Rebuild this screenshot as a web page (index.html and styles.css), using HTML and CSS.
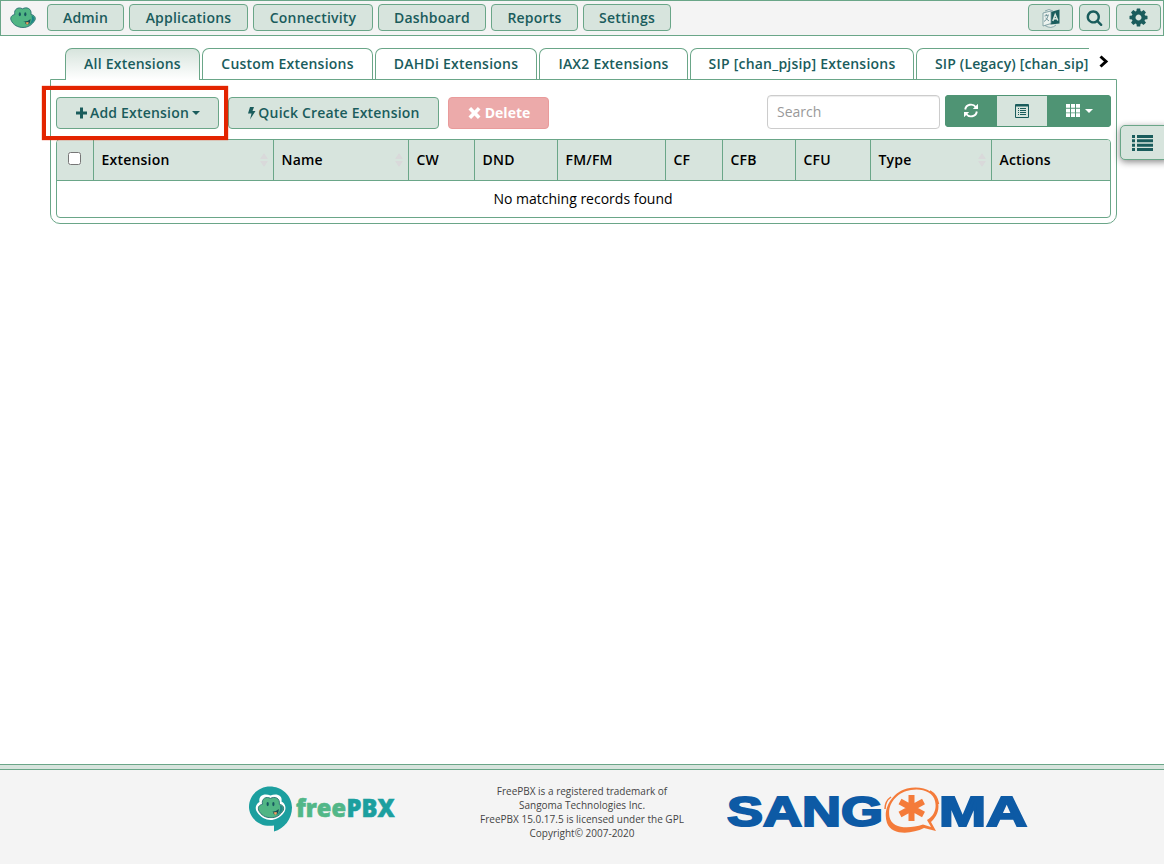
FILE: index.html
```html
<!DOCTYPE html>
<html lang="en">
<head>
<meta charset="utf-8">
<title>Extensions</title>
<link rel="stylesheet" href="styles.css">
</head>
<body>
<svg width="0" height="0" class="defs" aria-hidden="true">
  <symbol id="frog" viewBox="0 0 26 21">
    <path d="M4.800 7.500C3.500 2 8.500-.5 12.500 1.800C16.500-.5 22 1.500 21 7.500C24 8 26 10 25 13C22 18 18 20.500 13 20.500S3 18 1 13C0 10 2 8 4.800 7.500Z" fill="#50b584" stroke="#2c7174" stroke-width=".9"/>
    <path d="M21.500 8.500C25.500 9.500 25 13.500 22 16L18 18.500C21.500 15.500 22.500 13 21.500 8.500Z" fill="#1d8588"/>
    <ellipse cx="9.800" cy="7.300" rx="1.100" ry="2" fill="#185760"/><ellipse cx="15.300" cy="7.300" rx="1.100" ry="2" fill="#185760"/>
    <path d="M13 14.500Q17.500 15 20.500 12Q20.500 17.500 17 17.500Q15 17 15 15Z" fill="#174f58"/>
    <path d="M15.500 15.500L18.500 15Q19 17.800 16.800 17.500Z" fill="#f5a15c"/>
  </symbol>
</svg>
<header class="topbar">
  <svg class="frog"><use href="#frog"/></svg>
  <nav class="menu">
    <button class="btn w77">Admin</button><button class="btn w119">Applications</button><button class="btn w120">Connectivity</button><button class="btn w108">Dashboard</button><button class="btn w87">Reports</button><button class="btn w88">Settings</button>
  </nav>
  <div class="tools">
    <button class="btn w45"><svg width="20" height="20" viewBox="0 0 20 20"><path d="M9.500 4L18.500 1.500V15.500L9.500 16.500Z" fill="#1a5c5c"/><path d="M2 5L10 3V15.500L2 18ZM4 3Q8 0 12 3M4 17.500Q10 21.500 15 17" fill="#edf3ef" stroke="#71949a" stroke-width=".8"/><path d="M3.500 8L8 7M5 6L6 8M7 8Q6 12 3 13.500M4.500 10L8 13" fill="none" stroke="#71949a"/><path d="M11.800 13L14.200 6.500L16.800 12.500M12.700 11L15.700 10.500" fill="none" stroke="#d7e4dd" stroke-width="1.500"/></svg></button>
    <button class="btn w31"><svg width="17" height="17" viewBox="0 0 1792 1792"><path fill="currentColor" d="M1216 832q0-185-131.500-316.500t-316.500-131.500-316.500 131.500-131.500 316.500 131.500 316.500 316.500 131.500 316.500-131.500 131.500-316.500zm512 832q0 52-38 90t-90 38q-54 0-90-38l-343-342q-179 124-399 124-143 0-273.500-55.500t-225-150-150-225-55.500-273.500 55.500-273.500 150-225 225-150 273.500-55.500 273.500 55.500 225 150 150 225 55.500 273.500q0 220-124 399l343 343q37 37 37 90z"/></svg></button>
    <button class="btn w45"><svg width="21" height="21" viewBox="0 0 1792 1792"><path fill="currentColor" d="M1152 896q0-106-75-181t-181-75-181 75-75 181 75 181 181 75 181-75 75-181zm512-109v222q0 12-8 23t-20 13l-185 28q-19 54-39 91 35 50 107 138 10 12 10 25t-9 23q-27 37-99 108t-94 71q-12 0-26-9l-138-108q-44 23-91 38-16 136-29 186-7 28-36 28h-222q-14 0-24.500-8.500t-11.500-21.500l-28-184q-49-16-90-37l-141 107q-10 9-25 9-14 0-25-11-126-114-165-168-7-10-7-23 0-12 8-23 15-21 51-66.500t54-70.500q-27-50-41-99l-183-27q-13-2-21-12.500t-8-23.500v-222q0-12 8-23t19-13l186-28q14-46 39-92-40-57-107-138-10-12-10-24 0-10 9-23 26-36 98.500-107.500t94.500-71.500q13 0 26 10l138 107q44-23 91-38 16-136 29-186 7-28 36-28h222q14 0 24.500 8.500t11.500 21.500l28 184q49 16 90 37l142-107q9-9 24-9 13 0 25 10 129 119 165 170 7 8 7 22 0 12-8 23-15 21-51 66.500t-54 70.500q26 50 41 98l183 28q13 2 21 12.500t8 23.500z"/></svg></button>
  </div>
</header>

<main class="page">
  <div class="tabrow">
    <div class="tabs">
      <a class="tab active w135">All Extensions</a><a class="tab w171">Custom Extensions</a><a class="tab w162">DAHDi Extensions</a><a class="tab w149">IAX2 Extensions</a><a class="tab w224">SIP [chan_pjsip] Extensions</a><a class="tab last">SIP (Legacy) [chan_sip]</a>
    </div>
    <svg class="next" width="10" height="13" viewBox="0 0 10 13"><path d="M1.500 1.500L7 6.500L1.500 11.500" fill="none" stroke="#000" stroke-width="3"/></svg>
  </div>
  <section class="panel">
    <div class="toolbar">
      <div class="highlighted"><button class="btn big w163"><svg width="13" height="14" viewBox="0 0 13 14"><path d="M5 1.500h3v4h4v3H8v4H5v-4H1v-3h4z" fill="currentColor"/></svg><span>Add Extension</span><i class="caret"></i></button><div class="marker"></div></div>
      <button class="btn big w211"><svg width="9" height="14" viewBox="0 0 9 14"><path d="M3 1h4L5.500 5H8.500L3 13.500L4.500 7.500H1Z" fill="currentColor"/></svg><span>Quick Create Extension</span></button>
      <button class="btn big delete"><svg width="15" height="14" viewBox="0 0 14 14"><path d="M3.600 1L7 4.400L10.400 1L13 3.600L9.600 7L13 10.400L10.400 13L7 9.600L3.600 13L1 10.400L4.400 7L1 3.600Z" fill="currentColor"/></svg><span>Delete</span></button>
      <input class="search" placeholder="Search">
      <div class="group">
        <button class="seg w51"><svg width="16" height="15" viewBox="0 0 16 15"><path d="M2.200 6.500C3 1 10 .3 12.800 4M13.800 8.500C13 14 6 14.700 3.200 11" fill="none" stroke="currentColor" stroke-width="1.900"/><path d="M15 .8V6H9.800ZM1 14.200V9H6.200Z" fill="currentColor"/></svg></button>
        <button class="seg light"><svg width="14" height="14" viewBox="0 0 14 14"><path d="M.5.5h13v13H.5z" fill="none" stroke="currentColor"/><path d="M1 1h12v1.500H1zM3 4h1v1H3zM5 4h6v1H5zM3 6h1v1H3zM5 6h6v1H5zM3 8h1v1H3zM5 8h6v1H5zM3 10h1v1H3zM5 10h6v1H5z" fill="currentColor"/></svg></button>
        <button class="seg wide"><svg width="14" height="13" viewBox="0 0 14 13"><path d="M0 0h4v3.700H0zM5 0h4v3.700H5zM10 0h4v3.700h-4zM0 4.700h4v3.700H0zM5 4.700h4v3.700H5zM10 4.700h4v3.700h-4zM0 9.300h4V13H0zM5 9.300h4V13H5zM10 9.300h4V13h-4z" fill="currentColor"/></svg><i class="caret"></i></button>
      </div>
    </div>
    <div class="grid">
      <div class="head">
        <div class="check"><input type="checkbox"></div><div>Extension<i class="sort"></i></div><div>Name<i class="sort"></i></div><div>CW</div><div>DND</div><div>FM/FM</div><div>CF</div><div>CFB</div><div>CFU</div><div>Type<i class="sort"></i></div><div>Actions</div>
      </div>
      <div class="empty">No matching records found</div>
    </div>
  </section>
</main>

<button class="drawer"><svg width="21" height="16" viewBox="0 0 21 16"><path d="M0 0h3v3H0zM5 0h16v3H5zM0 4.300h3v3H0zM5 4.300h16v3H5zM0 8.700h3v3H0zM5 8.700h16v3H5zM0 13h3v3H0zM5 13h16v3H5z" fill="currentColor"/></svg></button>

<footer class="footer">
  <svg class="fpbx" width="150" height="50" viewBox="0 0 150 50">
    <path d="M26 45.500V39.500C11 42 1 31 1 21C1 9 11 .5 22 .5S44 9 44 21.500C44 33 36 43 26 45.500Z" fill="#1c9f9f"/>
    <path d="M11.500 16C10 9 17 7 22.500 9.500C28 7 35 9 33.500 15.500C38 18 38.500 23 36 26.500C32 32 27 34 22.500 34S12 31 9 26C6.500 22 8 18 11.500 16Z" fill="#fff"/>
    <use href="#frog" x="9.500" y="10.500" width="27" height="21.800"/>
    <text x="48" y="30.500" class="free" textLength="50" lengthAdjust="spacingAndGlyphs">free</text>
    <text x="98.500" y="30.500" class="pbx" textLength="48" lengthAdjust="spacingAndGlyphs">PBX</text>
  </svg>
  <div class="legal">FreePBX is a registered trademark of<br>Sangoma Technologies Inc.<br>FreePBX 15.0.17.5 is licensed under the GPL<br>Copyright© 2007-2020</div>
  <svg class="sangoma" width="302" height="50" viewBox="0 0 302 50">
    <text x="0" y="39.500" class="sg" textLength="156" lengthAdjust="spacingAndGlyphs">SANG</text>
    <text x="212" y="39.500" class="sg" textLength="88" lengthAdjust="spacingAndGlyphs">MA</text>
    <path fill-rule="evenodd" fill="#f47b3a" d="M180 2.500C195-1 209 5 211 16C213 26 208 32 204 36L209 45L197 42C185 48 165 50 160 37C155 22 166 6 180 2.500ZM184 4C170 6 160 18 162.500 31C165 43 182 43 196 38.500L204 41L200 34C207 30 210 23 208 15C206 6 195 2 184 4Z"/>
    <path d="M164 11Q158 15 158 23M203 5Q210 9 211.500 18" fill="none" stroke="#f47b3a" stroke-width="1.500"/>
    <path d="M184.500 9V35M173 15.500L196.500 28.500M173 28.500L196.500 15.500" stroke="#f47b3a" stroke-width="6"/>
  </svg>
</footer>
</body>
</html>
```

FILE: styles.css
```css
* { box-sizing: border-box; }
body { margin: 0; height: 864px; display: flex; flex-direction: column; overflow: hidden; background: #fff; font: 14px/20px "Open Sans", sans-serif; color: #000; position: relative; }
.defs { position: absolute; }
svg { display: block; flex: none; }
button { font: inherit; padding: 0; margin: 0; }
.topbar { height: 36px; flex: none; border: 1px solid #6aa688; background: #f4f4f4; display: flex; align-items: flex-start; padding: 3px 2px 0 9px; }
.frog { width: 26px; height: 21px; margin-top: 3px; }
.menu { display: flex; gap: 5px; margin-left: 11px; }
.tools { display: flex; gap: 6px; margin-left: auto; }
.btn { height: 27px; display: flex; align-items: center; justify-content: center; border: 1px solid #6aa688; border-radius: 4px; background: #d7e4dd; color: #1a5c5c; font-weight: 600; letter-spacing: .2px; white-space: nowrap; }
.w77 { width: 77px; } .w119 { width: 119px; } .w120 { width: 120px; } .w108 { width: 108px; } .w87 { width: 87px; } .w88 { width: 88px; } .w45 { width: 45px; } .w31 { width: 31px; }
.page { padding: 12px 47px 0 50px; flex: 1; }
.tabrow { display: flex; padding-left: 15px; height: 32px; margin-bottom: -1px; position: relative; }
.tabs { display: flex; gap: 2px; width: 1024px; overflow: hidden; }
.tab { flex: none; height: 31px; border: 1px solid #6aa688; border-bottom: 0; border-radius: 7px 7px 0 0; color: #1a5c5c; font-weight: 600; letter-spacing: .22px; padding-top: 5px; text-align: center; background: #fff; white-space: nowrap; }
.tab.active { height: 32px; background: linear-gradient(#d7e4dd, #fff); }
.tab.last { width: 260px; padding-left: 18px; text-align: left; letter-spacing: .15px; }
.w135 { width: 135px; } .w171 { width: 171px; } .w162 { width: 162px; } .w149 { width: 149px; } .w224 { width: 224px; }
.next { margin: 7px 0 0 10px; }
.panel { height: 145px; border: 1px solid #6aa688; border-radius: 0 0 10px 10px; padding: 15px 5px 0; }
.toolbar { display: flex; align-items: flex-start; height: 44px; }
.btn.big { height: 32px; margin-top: 2px; margin-right: 9px; gap: 2px; }
.highlighted { position: relative; }
.marker { position: absolute; left: -14px; top: -9px; width: 186px; height: 54px; border: 4px solid #e32400; box-shadow: 0 0 1px #e32400; z-index: 2; }
.w163 { width: 163px; } .w211 { width: 211px; }
.caret { border: 4px solid transparent; border-top-color: currentColor; border-bottom: 0; }
.btn .caret { margin-left: 1px; }
.btn.delete { width: 101px; background: #ecaaaa; border-color: #e99b9b; color: #fff; font-weight: 700; letter-spacing: 0; gap: 3px; }
.search { width: 173px; height: 34px; margin: 0 5px 0 auto; border: 1px solid #ccc; border-radius: 4px; padding: 0 9px 2px; font: inherit; box-shadow: inset 0 1px 1px #00000013; }
.search::placeholder { color: #999; }
.group { display: flex; width: 166px; height: 32px; border-radius: 4px; overflow: hidden; }
.seg { border: 1px solid #4f9474; background: #4f9474; color: #fff; display: flex; align-items: center; justify-content: center; gap: 5px; padding-bottom: 1px; }
.w51 { width: 51px; }
.seg.light { width: 52px; background: #d7e4dd; color: #1a5c5c; }
.seg.wide { width: 63px; }
.grid { border: 1px solid #6aa688; border-radius: 4px; height: 79px; overflow: hidden; }
.head { display: grid; grid-template-columns: 37px 180px 135px 66px 83px 108px 57px 73px 75px 121px 1fr; height: 41px; background: #d7e4dd; border-bottom: 1px solid #6aa688; font-weight: 600; letter-spacing: .2px; }
.head div { border-right: 1px solid #6aa688; padding: 0 8px 0 7.5px; display: flex; align-items: center; justify-content: space-between; }
.head div:last-child { border: 0; }
.head .check { padding: 0 11px; }
.check input { margin: 0 0 3px; width: 13px; height: 13px; }
.sort { width: 8px; height: 14px; margin-right: -3px; background: #d9d9da; clip-path: polygon(50% 0, 100% 43%, 0 43%, 0 57%, 100% 57%, 50% 100%, 0 57%, 0 43%); }
.empty { text-align: center; padding: 8px 1px 0 0; }
.drawer { position: absolute; left: 1120px; top: 125px; width: 50px; height: 35px; border: 1px solid #6aa688; border-radius: 5px; background: #d7e4dd; color: #1a5c5c; box-shadow: 0 2px 7px #0007; display: flex; align-items: center; padding-left: 11px; }
.footer { height: 100px; flex: none; background: #f4f4f4; border-top: 1px solid #6aa688; position: relative; display: flex; align-items: flex-start; padding: 21px 0 0 248px; }
.footer::before { content: ""; position: absolute; left: 0; right: 0; top: 0; height: 4px; background: #d7e4dd; border-bottom: 1px solid #6aa688; }
.legal { width: 208px; margin: -2px 0 0 80px; text-align: center; font-size: 10px; line-height: 14px; white-space: nowrap; color: #444; }
.sangoma { margin-left: 41px; }
.free, .pbx { font: 800 25px "Open Sans", sans-serif; fill: #52b788; stroke: #52b788; stroke-width: .6; }
.pbx { fill: #1c9f9f; stroke: #1c9f9f; }
.sg { font: 700 42px "Liberation Sans", sans-serif; fill: #0d5aa5; stroke: #0d5aa5; stroke-width: 2; }
```
